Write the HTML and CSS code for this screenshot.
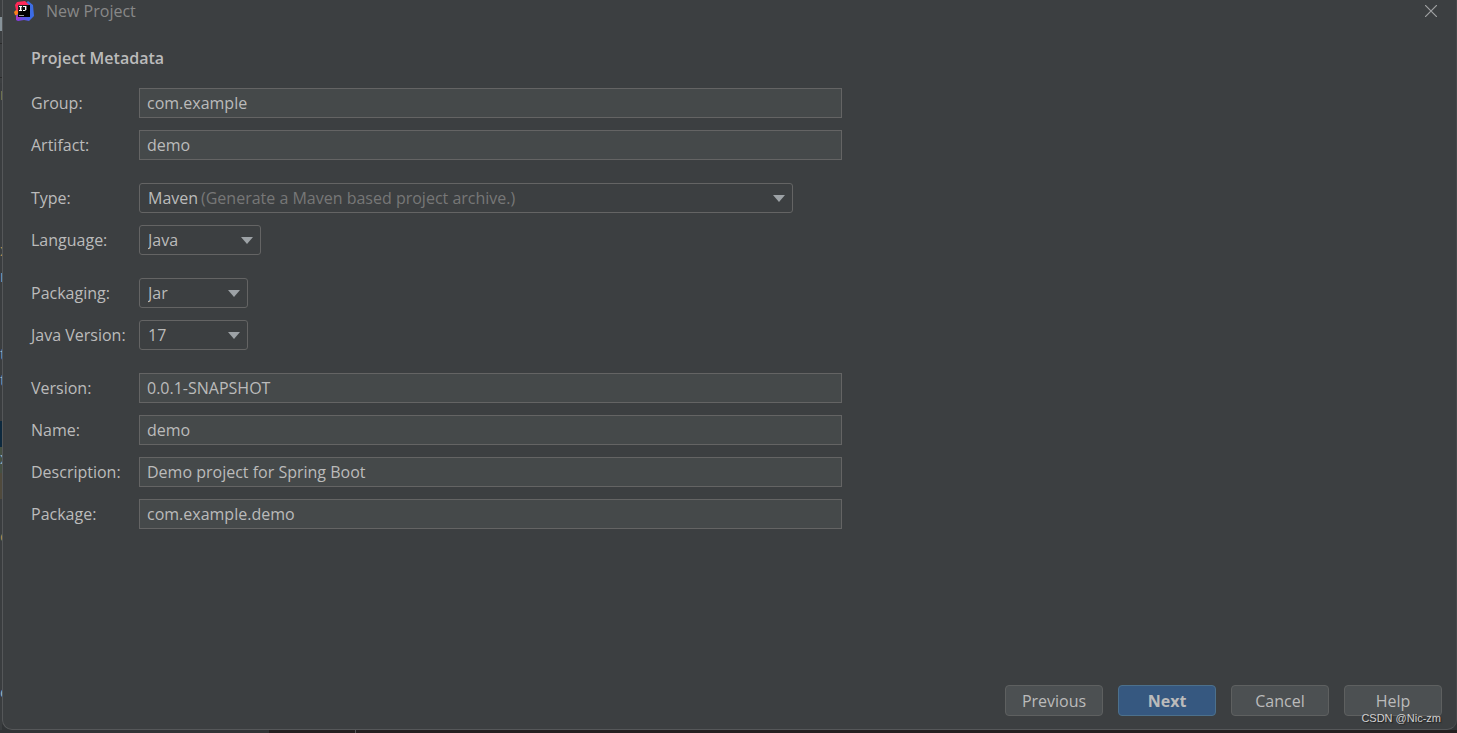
FILE: index.html
```html
<!DOCTYPE html>
<html lang="en">
<head>
    <meta charset="UTF-8">
    <meta name="viewport" content="width=device-width, initial-scale=1.0">
    <title>New Project</title>
    <link rel="stylesheet" href="styles.css">
</head>
<body>
    <div class="workspace">
        <!-- edge of the editor behind the dialog -->
        <div class="editor-edge" aria-hidden="true">
            <div class="tool-strip"></div>
            <div class="code-line string">r</div>
            <div class="code-line"></div>
            <div class="code-line"></div>
            <div class="code-line"></div>
            <div class="code-line"></div>
            <div class="code-line"></div>
            <div class="code-line string">x</div>
            <div class="code-line">n</div>
            <div class="code-line"></div>
            <div class="code-line"></div>
            <div class="code-line">t</div>
            <div class="code-line">t</div>
            <div class="code-line"></div>
            <div class="code-line selected"></div>
            <div class="code-line added">x</div>
            <div class="code-line changed"></div>
            <div class="code-line"></div>
            <div class="code-line string">c</div>
            <div class="code-line"></div>
            <div class="code-line"></div>
            <div class="code-line"></div>
            <div class="code-line"></div>
            <div class="code-line"></div>
            <div class="code-line">c</div>
        </div>

        <div class="dialog" role="dialog" aria-labelledby="dialogTitle">
            <header class="title-bar">
                <svg class="logo" viewBox="0 0 20 20" aria-hidden="true">
                    <defs>
                        <linearGradient id="blue" x1="0" y1="1" x2="1" y2="0">
                            <stop offset="0" stop-color="#9135e0"/>
                            <stop offset="0.5" stop-color="#3b6be8"/>
                            <stop offset="1" stop-color="#3f6fe0"/>
                        </linearGradient>
                        <linearGradient id="black" x1="0" y1="0" x2="1" y2="1">
                            <stop offset="0" stop-color="#333"/>
                            <stop offset="0.5" stop-color="#000"/>
                        </linearGradient>
                    </defs>
                    <path fill="#fc801d" d="M0 11 4 7v8l-3-1z"/>
                    <path fill="url(#blue)" d="M10 4 14 0l5 4 1 11-5 5-5-1-6 1-2-1 1-5z"/>
                    <path fill="#fe2857" d="M1 4 3 1l8-1 4 4-9 4v4L2 9z"/>
                    <path fill="#a238c9" d="M2 14v5l5-2z"/>
                    <path fill="url(#black)" d="M4 4h12v12H4z"/>
                    <path fill="#fff" d="M5 5h3v1H5zM6 6h1v4H6zM5 9h3v1H5zM9 5h3v1H9zM11 6h1v3l-1 1H9V9h2z"/>
                    <path fill="#fff" fill-opacity="0.4" d="M7 6h1v3H7zM12 5h1v4h-1z"/>
                    <path fill="#999" d="M5 14h5v1H5z"/>
                </svg>
                <h1 class="title" id="dialogTitle">New Project</h1>
                <button class="close" type="button" aria-label="Close">
                    <svg viewBox="0 0 12 12" aria-hidden="true">
                        <path fill="none" stroke="#a0a2a3" stroke-width="1.200" d="M0 0l12 12M12 0L0 12"/>
                    </svg>
                </button>
            </header>

            <form class="metadata">
                <h2 class="heading">Project Metadata</h2>
                <div class="group">
                    <div class="row">
                        <label for="group">Group:</label>
                        <input type="text" id="group" value="com.example">
                    </div>
                    <div class="row">
                        <label for="artifact">Artifact:</label>
                        <input type="text" id="artifact" value="demo">
                    </div>
                </div>
                <div class="group">
                    <div class="row">
                        <label for="type">Type:</label>
                        <div class="select type">
                            <select id="type"><option>Maven</option></select>
                            <span class="hint">(Generate a Maven based project archive.)</span>
                            <svg class="arrow" viewBox="0 0 12 7" aria-hidden="true"><path d="M0 0h12L6 7z"/></svg>
                        </div>
                    </div>
                    <div class="row">
                        <label for="language">Language:</label>
                        <div class="select language">
                            <select id="language"><option>Java</option></select>
                            <svg class="arrow" viewBox="0 0 12 7" aria-hidden="true"><path d="M0 0h12L6 7z"/></svg>
                        </div>
                    </div>
                </div>
                <div class="group">
                    <div class="row">
                        <label for="packaging">Packaging:</label>
                        <div class="select short">
                            <select id="packaging"><option>Jar</option></select>
                            <svg class="arrow" viewBox="0 0 12 7" aria-hidden="true"><path d="M0 0h12L6 7z"/></svg>
                        </div>
                    </div>
                    <div class="row">
                        <label for="javaVersion">Java Version:</label>
                        <div class="select short">
                            <select id="javaVersion"><option>17</option></select>
                            <svg class="arrow" viewBox="0 0 12 7" aria-hidden="true"><path d="M0 0h12L6 7z"/></svg>
                        </div>
                    </div>
                </div>
                <div class="group">
                    <div class="row">
                        <label for="version">Version:</label>
                        <input type="text" id="version" value="0.0.1-SNAPSHOT">
                    </div>
                    <div class="row">
                        <label for="name">Name:</label>
                        <input type="text" id="name" value="demo">
                    </div>
                    <div class="row">
                        <label for="description">Description:</label>
                        <input type="text" id="description" value="Demo project for Spring Boot">
                    </div>
                    <div class="row">
                        <label for="package">Package:</label>
                        <input type="text" id="package" value="com.example.demo">
                    </div>
                </div>
            </form>

            <footer class="buttons">
                <button type="button">Previous</button>
                <button type="button" class="primary">Next</button>
                <button type="button">Cancel</button>
                <button type="button">Help</button>
            </footer>
            <span class="watermark">CSDN @Nic-zm</span>
        </div>
    </div>
    <div class="status-bar"><div class="status-left"></div><div class="status-mid"></div></div>
</body>
</html>
```

FILE: styles.css
```css
* {
    box-sizing: border-box;
}
body {
    margin: 0;
    height: 100vh;
    display: flex;
    flex-direction: column;
    background: #313436;
    color: #bbbbbb;
    font-family: "Open Sans", "Noto Sans", sans-serif;
    font-size: 16px;
    line-height: 24px;
}
h1, h2 {
    margin: 0;
    font-size: 16px;
}
.workspace {
    flex: 1;
    min-height: 0;
    display: flex;
}

/* editor edge */
.editor-edge {
    width: 2px;
    overflow: hidden;
    background: #3a3d3f;
    color: #9fb3c2;
}
.tool-strip {
    height: 83px;
    background: linear-gradient(#3c3f41 17px, #87939a 17px, #87939a 31px, #3c3f41 31px, #3c3f41 43px, #2b2b2b 43px, #2b2b2b 44px, #3c3f41 44px, #3c3f41 77px, #2b2b2b 77px, #2b2b2b 78px, #3c3f41 78px);
}
.code-line {
    height: 26px;
    line-height: 22px;
}
.string {
    color: #c08a50;
}
.selected {
    background: #0d293e;
}
.added {
    background: #455043;
}
.changed {
    background: #504a3c;
}

/* dialog */
.dialog {
    position: relative;
    flex: 1;
    display: flex;
    flex-direction: column;
    background: #3c3f41;
    border: 1px solid #555759;
    border-top: 0;
    border-right-color: #46494b;
    border-radius: 0 0 10px 10px;
}
.title-bar {
    display: flex;
    align-items: center;
    height: 22px;
    padding: 0 19px 0 11px;
}
.logo {
    width: 20px;
    height: 20px;
}
.title {
    flex: 1;
    margin-left: 12px;
    color: #888888;
    font-weight: 400;
}
.close {
    display: flex;
    padding: 0;
    border: 0;
    background: none;
}
.close svg {
    width: 12px;
    height: 12px;
}
.metadata {
    flex: 1;
    width: 100%;
    max-width: 867px;
    padding: 24px 28px 0;
}
.heading {
    margin-bottom: 18px;
    font-weight: 600;
}
.group {
    display: flex;
    flex-direction: column;
    gap: 12px;
    margin-bottom: 23px;
}
.row {
    display: flex;
    align-items: center;
}
.row label {
    width: 108px;
    flex: none;
}
input, select, .buttons button {
    height: 30px;
    color: #bbbbbb;
    font: inherit;
}
input {
    flex: 1;
    min-width: 0;
    padding: 0 7px;
    border: 1px solid #646464;
    border-radius: 0;
    background: #45494a;
}

/* select, hint and arrow share one grid cell */
.select {
    display: grid;
    align-items: center;
}
.select > * {
    grid-area: 1 / 1;
}
.select select {
    width: 100%;
    padding: 0 8px;
    border: 1px solid #646464;
    border-radius: 3px;
    background: #3c3f41;
    appearance: none;
}
.hint {
    padding-left: 62px;
    color: #777777;
    pointer-events: none;
}
.arrow {
    justify-self: end;
    width: 12px;
    height: 7px;
    margin-right: 8px;
    fill: #9da2a6;
    pointer-events: none;
}
.type {
    flex: 1;
    max-width: 654px;
}
.language {
    width: 122px;
}
.short {
    width: 109px;
}

.buttons {
    display: flex;
    justify-content: flex-end;
    gap: 15px;
    padding: 0 14px 13px;
}
.buttons button {
    width: 98px;
    height: 31px;
    padding: 0;
    border: 1px solid #5e6060;
    border-radius: 4px;
    background: #4c5052;
}
.buttons .primary {
    border-color: #4c708c;
    background: #365880;
    font-weight: 700;
}
.watermark {
    position: absolute;
    right: 15px;
    bottom: 4px;
    color: #d0d0d0;
    font-family: "Liberation Sans", Arial, sans-serif;
    font-size: 11px;
    line-height: 14px;
    text-shadow: 1px 1px 1px #222222;
    pointer-events: none;
}

.status-bar {
    display: flex;
    height: 3px;
    background: #241f20;
}
.status-left {
    width: 269px;
    background: #313436;
}
.status-mid {
    width: 87px;
    border-right: 1px solid #555759;
}
```
